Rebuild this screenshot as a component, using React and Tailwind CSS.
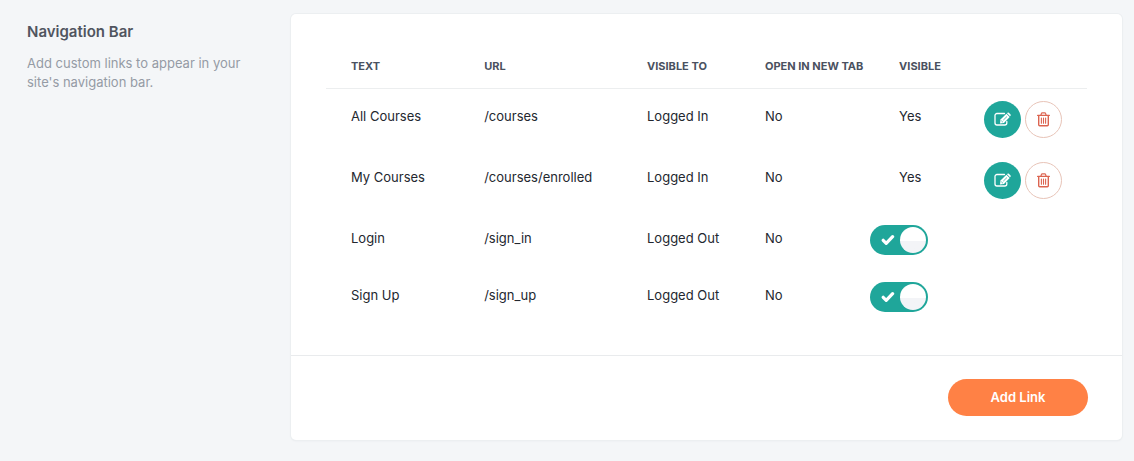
const links = [
  { text: 'All Courses', url: '/courses', visibleTo: 'Logged In', newTab: 'No', custom: true },
  { text: 'My Courses', url: '/courses/enrolled', visibleTo: 'Logged In', newTab: 'No', custom: true },
  { text: 'Login', url: '/sign_in', visibleTo: 'Logged Out', newTab: 'No', custom: false },
  { text: 'Sign Up', url: '/sign_up', visibleTo: 'Logged Out', newTab: 'No', custom: false },
]

function EditIcon() {
  return (
    <svg width="17" height="15" viewBox="0 0 17 15" fill="none" aria-hidden="true">
      <path d="M10.5 1.5H3a2 2 0 0 0-2 2v7.5a2 2 0 0 0 2 2h7.8a2 2 0 0 0 2-2V9.4" stroke="currentColor" strokeWidth="1.3" strokeLinecap="round" />
      <path d="M6 11.4l.5-4 5.9-5.6 3.3 3.2-5.8 5.9z" fill="currentColor" />
      <path d="M13 1.2l.5-.4a1 1 0 0 1 1.4 0l1.6 1.6a1 1 0 0 1 0 1.4l-.5.5z" fill="currentColor" />
      <path d="M9.3 8.1l3.7-3.6" stroke="#1fa69a" strokeWidth="0.7" />
      <path d="M7.4 8.8l1.4 1.3" stroke="#1fa69a" strokeWidth="0.8" />
    </svg>
  )
}

function TrashIcon() {
  return (
    <svg width="13" height="15" viewBox="0 0 13 15" fill="none" stroke="currentColor" aria-hidden="true">
      <path d="M0.7 3.4h11.6" strokeWidth="1.4" strokeLinecap="round" />
      <path d="M3.9 3l.6-1.6a.8.8 0 0 1 .8-.6h2.4a.8.8 0 0 1 .8.6L9.1 3" strokeWidth="1.3" />
      <path d="M1.7 3.6v9.2a1 1 0 0 0 1 1h7.6a1 1 0 0 0 1-1V3.6" strokeWidth="1.4" />
      <path d="M4.4 6v5.2M6.5 6v5.2M8.6 6v5.2" strokeWidth="1.1" strokeLinecap="round" />
    </svg>
  )
}

function Toggle({ label }) {
  return (
    <label className="flex h-[30px] w-[58px] cursor-pointer items-center justify-between rounded-full bg-[#dfe3e8] pr-0.5 pl-[11px] has-checked:bg-[#1fa69a]">
      <input type="checkbox" defaultChecked aria-label={label} className="sr-only" />
      <svg width="14" height="12" viewBox="0 0 14 12" fill="none" stroke="#fff" strokeWidth="3.2" strokeLinecap="round" strokeLinejoin="round" aria-hidden="true">
        <path d="M2.2 6.3l3 3 6.4-6.6" />
      </svg>
      <span className="h-[26px] w-[26px] rounded-full bg-linear-to-b from-white from-55% to-[#f3f4f7] to-55%" />
    </label>
  )
}

function LinkRow({ link }) {
  return (
    <tr className="align-top text-[13px] leading-5 text-[#23272f]">
      <td className="pt-[17px] pl-[25px]">{link.text}</td>
      <td className="pt-[17px] pl-[25px]">{link.url}</td>
      <td className="pt-[17px] pl-[25px]">{link.visibleTo}</td>
      <td className="pt-[17px] pl-[25px]">{link.newTab}</td>
      {link.custom ? (
        <td className="pt-[17px] pl-[29px]">Yes</td>
      ) : (
        <td className="pt-3.5 pb-[13px]">
          <Toggle label={`${link.text} visible`} />
        </td>
      )}
      <td>
        {link.custom && (
          <div className="flex gap-1 py-3">
            <button type="button" aria-label={`Edit ${link.text}`} className="flex h-[37px] w-[37px] items-center justify-center rounded-full bg-[#1fa69a] text-white">
              <EditIcon />
            </button>
            <button type="button" aria-label={`Delete ${link.text}`} className="flex h-[37px] w-[37px] items-center justify-center rounded-full border border-[#e8c4b8] text-[#dc6450]">
              <TrashIcon />
            </button>
          </div>
        )}
      </td>
    </tr>
  )
}

export default function App() {
  return (
    <div className="flex min-h-screen items-start bg-[#f4f6f8] pt-3.5 pr-3 pb-5 pl-[27px] font-['Inter',sans-serif]">
      <aside className="w-[264px] shrink-0 pt-2 pr-10">
        <h2 className="text-[15px] leading-5 font-semibold text-[#50555f]">Navigation Bar</h2>
        <p className="mt-3 text-[13px] leading-[19px] text-[#959ba5]">
          Add custom links to appear in your site's navigation bar.
        </p>
      </aside>

      <main className="min-w-0 flex-1 rounded-[5px] bg-white shadow-[0_0_0_1px_#eceff1,0_1px_2px_#e3e7ea]">
        <div className="px-[35px] pt-[35px] pb-[30px]">
          <table className="w-full table-fixed text-left">
            <colgroup>
              <col className="w-[17.5%]" />
              <col className="w-[21.4%]" />
              <col className="w-[15.5%]" />
              <col className="w-[17.1%]" />
              <col className="w-[15%]" />
              <col className="w-[13.5%]" />
            </colgroup>
            <thead>
              <tr className="border-b border-[#eceeef] text-[11px] leading-4 whitespace-nowrap text-[#4a5160] uppercase">
                <th className="pt-[9px] pb-3.5 pl-[25px] font-bold">Text</th>
                <th className="pt-[9px] pb-3.5 pl-[25px] font-bold">URL</th>
                <th className="pt-[9px] pb-3.5 pl-[25px] font-bold">Visible to</th>
                <th className="pt-[9px] pb-3.5 pl-[25px] font-bold">Open in new tab</th>
                <th className="pt-[9px] pb-3.5 pl-[29px] font-bold">Visible</th>
                <td />
              </tr>
            </thead>
            <tbody>
              {links.map((link) => (
                <LinkRow key={link.text} link={link} />
              ))}
            </tbody>
          </table>
        </div>

        <div className="flex justify-end border-t border-[#e9ebed] px-[34px] pt-[23px] pb-6">
          <button type="button" className="h-[37px] w-[140px] rounded-full bg-[#ff8145] text-[13px] font-semibold text-white">
            Add Link
          </button>
        </div>
      </main>
    </div>
  )
}
